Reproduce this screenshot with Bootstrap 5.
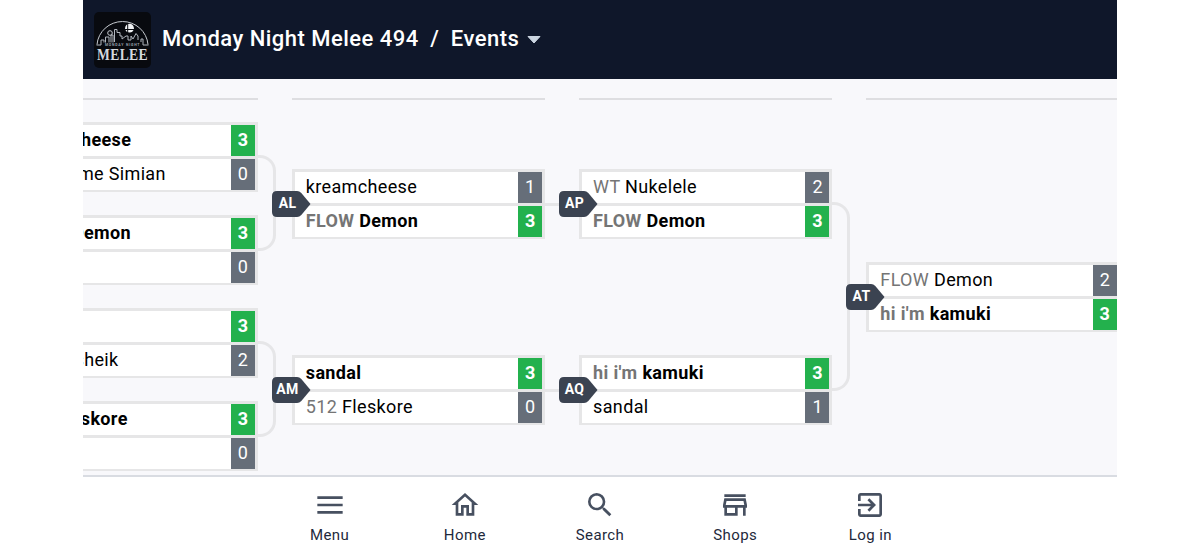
<!DOCTYPE html>
<html lang="en">
<head>
<meta charset="utf-8">
<meta name="viewport" content="width=device-width, initial-scale=1">
<title>Monday Night Melee 494</title>
<link href="https://cdn.jsdelivr.net/npm/bootstrap@5.3.0/dist/css/bootstrap.min.css" rel="stylesheet">
<style>
  body { font-family: Roboto, "Liberation Sans", sans-serif; background: #fff; color: #000; }
  .shell { width: 1034px; height: 554px; }
  .topbar { height: 79px; background: #0f172a; color: #fff; font-size: 22px; font-weight: 500; padding-left: 10px; letter-spacing: .48px; }
  .topbar svg { flex: none; }
  .topbar span { padding-bottom: 2px; }
  .event-name { margin-left: 10px; }
  .crumb-sep { margin: 0 11.5px; }
  .board { height: 396px; background: #f8f8fb; }
  .rounds { margin-left: -78.5px; gap: 33.9px; padding-top: 19px; }
  .round-col { width: 253.4px; border-top: 2px solid #dedee1; }
  .duel { position: relative; width: 253.4px; height: 70px; background: #e6e6e7; padding: 3px 3px 2px; gap: 3px; }
  .entry { height: 31px; background: #fff; font-size: 18px; line-height: 29px; }
  .entry .who { padding-left: 11px; letter-spacing: .35px; white-space: pre; }
  .entry .tag { color: #757575; }
  .entry .pts { width: 24px; background: #666e79; color: #fff; text-align: center; }
  .entry.won { font-weight: 700; }
  .entry.won .pts { background: #23b14d; }
  .entry .who-simian { padding-left: 47.500px; }
  .entry .who-sheik { padding-left: 67px; }
  .bracket-pair { position: relative; }
  .bracket-pair::after { content: ""; position: absolute; left: 100%; top: 33px; bottom: 34px; width: 18px; border: 3px solid #e6e6e8; border-left: 0; border-radius: 0 16px 16px 0; }
  .feeds::after { content: ""; position: absolute; left: 100%; top: 34px; width: 20px; height: 3px; background: #e6e6e8; }
  .flag { position: absolute; z-index: 2; left: -20px; top: 22px; width: 39px; height: 26px; }
  .flag text { font: 700 14px Roboto, sans-serif; fill: #fff; text-anchor: middle; letter-spacing: .3px; }
  .gap-near { gap: 23px; }
  .gap-far { gap: 116px; }
  .tabs { height: 79px; border-top: 2px solid #d9dce2; color: #1e293b; font-size: 15px; letter-spacing: .4px; }
  .tab-link { width: 135.2px; padding-top: 11.500px; line-height: 20px; }
  .tab-link svg { width: 32px; height: 32px; fill: #475060; margin-bottom: 4px; }
</style>
<script src="https://cdn.jsdelivr.net/npm/bootstrap@5.3.0/dist/js/bootstrap.bundle.min.js"></script>
</head>
<body class="overflow-hidden">
<svg class="d-none"><symbol id="pennant" viewBox="0 0 39 26"><path fill="#3b4351" d="M5 0H25Q27.500 0 29.300 2L38.500 13L29.300 24Q27.500 26 25 26H5Q0 26 0 21V5Q0 0 5 0Z"/></symbol></svg>
<div class="shell mx-auto d-flex flex-column overflow-hidden">
  <header class="topbar d-flex align-items-center">
    <svg width="59" height="58" viewBox="0 0 59 58">
      <rect x="1" y="1" width="57" height="56" rx="5" fill="#080a0f"/>
      <g fill="none" stroke="#c6cad0" stroke-width="1">
        <path d="M4 33.500A25.600 25.200 0 0 1 55 33.500"/>
        <path d="M3.500 34H8V29H11V31.500M12.500 31.500V26H16V31.500M18 31.500V24H20V31.500M21.500 31V18.500H24V21.500H27V25H29V28L33 25H35V29H38V25L40 28L43 22.500L45 25V29M48 31V28H50V34H55.500" stroke="#b1b6be"/>
        <circle cx="17" cy="22" r="2.300"/>
      </g>
      <circle cx="36.500" cy="17.200" r="4.400" fill="#f1f3f5"/><path d="M34.700 12V22M32 18.500H41" stroke="#080a0f" stroke-width="1"/>
      <text x="12" y="35" font-family="Roboto" font-weight="700" font-size="3.500" fill="#9ca3ad" textLength="35">MONDAY NIGHT</text>
      <text x="4" y="49" font-family="Liberation Serif" font-weight="700" font-size="17.500" fill="#d5d9df" textLength="51" lengthAdjust="spacingAndGlyphs">MELEE</text>
    </svg>
    <span class="event-name">Monday Night Melee 494</span><span class="crumb-sep">/</span><span>Events</span>
    <svg class="ms-2" width="14" height="8" viewBox="0 0 14 8"><path fill="#cbd5e1" d="M1 .5H13L7 7Z" stroke="#cbd5e1" stroke-linejoin="round"/></svg>
  </header>

  <main class="board overflow-hidden">
    <div class="rounds d-flex">
      <section class="round-col flex-shrink-0">
        <div class="d-flex flex-column gap-near" style="padding-top:22px">
          <div class="bracket-pair d-flex flex-column gap-near">
            <div class="duel d-flex flex-column">
              <div class="entry won d-flex"><span class="who flex-grow-1">kreamcheese</span><span class="pts">3</span></div>
              <div class="entry d-flex"><span class="who who-simian flex-grow-1">Prime Simian</span><span class="pts">0</span></div>
            </div>
            <div class="duel d-flex flex-column">
              <div class="entry won d-flex"><span class="who flex-grow-1"><span class="tag">FLOW</span> Demon</span><span class="pts">3</span></div>
              <div class="entry d-flex"><span class="who flex-grow-1"></span><span class="pts">0</span></div>
            </div>
          </div>
          <div class="bracket-pair d-flex flex-column gap-near">
            <div class="duel d-flex flex-column">
              <div class="entry won d-flex"><span class="who flex-grow-1">sandal</span><span class="pts">3</span></div>
              <div class="entry d-flex"><span class="who who-sheik flex-grow-1">sheik</span><span class="pts">2</span></div>
            </div>
            <div class="duel d-flex flex-column">
              <div class="entry won d-flex"><span class="who flex-grow-1"><span class="tag">512</span> Fleskore</span><span class="pts">3</span></div>
              <div class="entry d-flex"><span class="who flex-grow-1"></span><span class="pts">0</span></div>
            </div>
          </div>
        </div>
      </section>

      <section class="round-col flex-shrink-0">
        <div class="d-flex flex-column gap-far" style="padding-top:69px">
          <div class="duel feeds d-flex flex-column">
            <svg class="flag"><use href="#pennant"/><text x="15.500" y="17">AL</text></svg>
            <div class="entry d-flex"><span class="who flex-grow-1">kreamcheese</span><span class="pts">1</span></div>
            <div class="entry won d-flex"><span class="who flex-grow-1"><span class="tag">FLOW</span> Demon</span><span class="pts">3</span></div>
          </div>
          <div class="duel feeds d-flex flex-column">
            <svg class="flag"><use href="#pennant"/><text x="15.500" y="17">AM</text></svg>
            <div class="entry won d-flex"><span class="who flex-grow-1">sandal</span><span class="pts">3</span></div>
            <div class="entry d-flex"><span class="who flex-grow-1"><span class="tag">512</span> Fleskore</span><span class="pts">0</span></div>
          </div>
        </div>
      </section>

      <section class="round-col flex-shrink-0">
        <div style="padding-top:69px">
          <div class="bracket-pair d-flex flex-column gap-far">
            <div class="duel d-flex flex-column">
              <svg class="flag"><use href="#pennant"/><text x="15.500" y="17">AP</text></svg>
              <div class="entry d-flex"><span class="who flex-grow-1"><span class="tag">WT</span> Nukelele</span><span class="pts">2</span></div>
              <div class="entry won d-flex"><span class="who flex-grow-1"><span class="tag">FLOW</span> Demon</span><span class="pts">3</span></div>
            </div>
            <div class="duel d-flex flex-column">
              <svg class="flag"><use href="#pennant"/><text x="15.500" y="17">AQ</text></svg>
              <div class="entry won d-flex"><span class="who flex-grow-1"><span class="tag">hi i'm</span> kamuki</span><span class="pts">3</span></div>
              <div class="entry d-flex"><span class="who flex-grow-1">sandal</span><span class="pts">1</span></div>
            </div>
          </div>
        </div>
      </section>

      <section class="round-col flex-shrink-0">
        <div style="padding-top:162px">
          <div class="duel d-flex flex-column">
            <svg class="flag"><use href="#pennant"/><text x="15.500" y="17">AT</text></svg>
            <div class="entry d-flex"><span class="who flex-grow-1"><span class="tag">FLOW</span> Demon</span><span class="pts">2</span></div>
            <div class="entry won d-flex"><span class="who flex-grow-1"><span class="tag">hi i'm</span> kamuki</span><span class="pts">3</span></div>
          </div>
        </div>
      </section>
    </div>
  </main>

  <nav class="tabs d-flex justify-content-center text-center">
    <div class="tab-link"><svg class="d-block mx-auto" viewBox="0 0 24 24"><path d="M2.500 5.500h19v2h-19zM2.500 11h19v2h-19zM2.500 16.500h19v2h-19z"/></svg>Menu</div>
    <div class="tab-link"><svg class="d-block mx-auto" viewBox="0 0 24 24"><path d="M12 5.690l5 4.500V18h-2v-6H9v6H7v-7.810l5-4.500M12 3L2 12h3v8h6v-6h2v6h6v-8h3L12 3z"/></svg>Home</div>
    <div class="tab-link"><svg class="d-block mx-auto" viewBox="0 0 24 24"><path d="M15.500 14h-.79l-.28-.27A6.471 6.471 0 0 0 16 9.500 6.500 6.500 0 1 0 9.500 16c1.610 0 3.090-.59 4.230-1.570l.27.28v.79l5 4.990L20.490 19l-4.990-5zm-6 0C7.010 14 5 11.990 5 9.500S7.010 5 9.500 5 14 7.010 14 9.500 11.990 14 9.500 14z"/></svg>Search</div>
    <div class="tab-link"><svg class="d-block mx-auto" viewBox="0 0 24 24"><path d="M18.360 9l.6 3H5.040l.6-3h12.720M20 4H4v2h16V4zm0 3H4l-1 5v2h1v6h10v-6h4v6h2v-6h1v-2l-1-5zM6 18v-4h6v4H6z"/></svg>Shops</div>
    <div class="tab-link"><svg class="d-block mx-auto" viewBox="0 0 24 24"><path d="M10.090 15.590L11.500 17l5-5-5-5-1.410 1.410L12.670 11H3v2h9.670l-2.580 2.590zM19 3H5c-1.110 0-2 .9-2 2v4h2V5h14v14H5v-4H3v4c0 1.100.89 2 2 2h14c1.100 0 2-.9 2-2V5c0-1.100-.9-2-2-2z"/></svg>Log in</div>
  </nav>
</div>
</body>
</html>
